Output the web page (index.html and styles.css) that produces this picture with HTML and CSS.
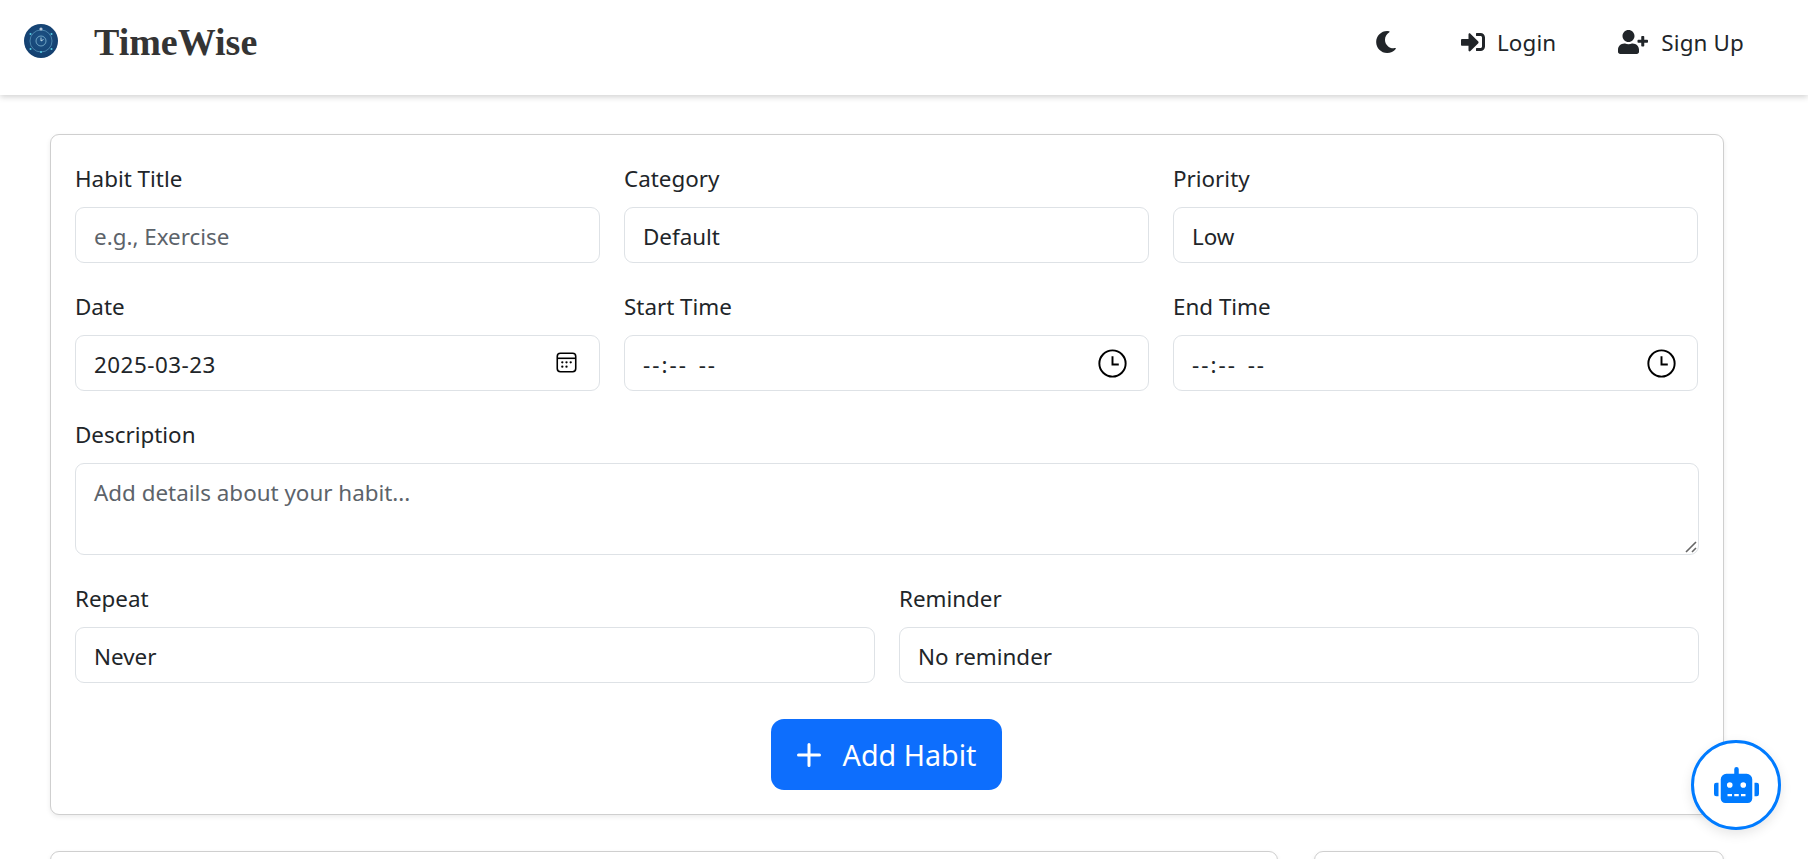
FILE: index.html
```html
<!DOCTYPE html>
<html lang="en">
<head>
<meta charset="utf-8">
<title>TimeWise</title>
<link rel="stylesheet" href="styles.css">
</head>
<body>
<nav class="navbar">
  <a class="brand">
    <svg class="logo" viewBox="0 0 34 34" aria-hidden="true">
      <defs><radialGradient id="lg" cx="50%" cy="45%" r="60%"><stop offset="0" stop-color="#1d5488"/><stop offset="1" stop-color="#123c6b"/></radialGradient></defs>
      <circle cx="17" cy="17" r="17" fill="url(#lg)"/>
      <circle cx="17" cy="17" r="11" fill="none" stroke="#5f9cc0" stroke-width=".7"/>
      <circle cx="17" cy="17" r="5" fill="none" stroke="#8fc4dc" stroke-width=".7"/>
      <path d="M17 13.5V17l2.5-1.5" fill="none" stroke="#d6eef5" stroke-width=".8"/>
      <g fill="#58d0e6"><circle cx="17" cy="28" r="1"/><circle cx="6.5" cy="10" r="1"/><circle cx="27.5" cy="10" r="1"/><circle cx="6.5" cy="25" r="1"/><circle cx="27.5" cy="25" r="1"/></g>
      <circle cx="17" cy="5" r="1.6" fill="#b9c6d8"/>
    </svg>
    <span class="brand-name">TimeWise</span>
  </a>
  <div class="nav-actions">
    <button class="nav-icon" aria-label="Dark mode">
      <svg class="ico-moon" viewBox="0 0 512 512"><path d="M283.211 512c78.962 0 151.079-35.925 198.857-94.792 7.068-8.708-.639-21.43-11.562-19.35-124.203 23.654-238.262-71.576-238.262-196.954 0-72.222 38.662-138.635 101.498-174.394 9.686-5.512 7.25-20.197-3.756-22.23A258.156 258.156 0 0 0 283.211 0c-141.309 0-256 114.511-256 256 0 141.309 114.511 256 256 256z"/></svg>
    </button>
    <a class="nav-link">
      <svg class="ico-login" viewBox="0 0 512 512"><path d="M416 448h-84c-6.6 0-12-5.4-12-12v-40c0-6.6 5.4-12 12-12h84c17.7 0 32-14.3 32-32V160c0-17.7-14.3-32-32-32h-84c-6.6 0-12-5.4-12-12V76c0-6.6 5.4-12 12-12h84c53 0 96 43 96 96v192c0 53-43 96-96 96zm-47-201L201 79c-15-15-41-4.5-41 17v96H24c-13.3 0-24 10.7-24 24v96c0 13.3 10.7 24 24 24h136v96c0 21.5 26 32 41 17l168-168c9.3-9.4 9.3-24.6 0-34z"/></svg>
      Login
    </a>
    <a class="nav-link">
      <svg class="ico-signup" viewBox="0 0 640 512"><path d="M624 208h-64v-64c0-8.8-7.2-16-16-16h-32c-8.8 0-16 7.2-16 16v64h-64c-8.8 0-16 7.2-16 16v32c0 8.8 7.2 16 16 16h64v64c0 8.8 7.2 16 16 16h32c8.8 0 16-7.2 16-16v-64h64c8.8 0 16-7.2 16-16v-32c0-8.8-7.2-16-16-16zm-400 48c70.7 0 128-57.3 128-128S294.7 0 224 0 96 57.3 96 128s57.3 128 128 128zm89.6 32h-16.7c-22.2 10.2-46.9 16-72.9 16s-50.6-5.8-72.9-16h-16.7C60.2 288 0 348.2 0 422.4V464c0 26.5 21.5 48 48 48h352c26.5 0 48-21.5 48-48v-41.6c0-74.2-60.2-134.4-134.4-134.4z"/></svg>
      Sign Up
    </a>
  </div>
</nav>

<main class="page">
  <form class="card form-card">
    <div class="row row-3">
      <div class="field"><label>Habit Title</label><div class="control placeholder">e.g., Exercise</div></div>
      <div class="field"><label>Category</label><div class="control">Default</div></div>
      <div class="field"><label>Priority</label><div class="control">Low</div></div>
    </div>
    <div class="row row-3">
      <div class="field"><label>Date</label>
        <div class="control date">2025-03-23
          <svg class="ico-cal" viewBox="0 0 20 20"><rect x="1.2" y="1.2" width="17.6" height="17.6" rx="3" fill="none" stroke="#000" stroke-width="1.5"/><path d="M1.2 6h17.6" stroke="#000" stroke-width="1.5"/><g><circle cx="6" cy="9.8" r="1.1"/><circle cx="10" cy="9.8" r="1.1"/><circle cx="14" cy="9.8" r="1.1"/><circle cx="6" cy="14" r="1.1"/><circle cx="10" cy="14" r="1.1"/></g></svg>
        </div>
      </div>
      <div class="field"><label>Start Time</label>
        <div class="control time">--:-- --
          <svg class="ico-clock" viewBox="0 0 30 30"><circle cx="15" cy="15" r="13.6" fill="none" stroke="#000" stroke-width="2"/><path d="M15 7.5V16h6.5" fill="none" stroke="#000" stroke-width="2"/></svg>
        </div>
      </div>
      <div class="field"><label>End Time</label>
        <div class="control time">--:-- --
          <svg class="ico-clock" viewBox="0 0 30 30"><circle cx="15" cy="15" r="13.6" fill="none" stroke="#000" stroke-width="2"/><path d="M15 7.5V16h6.5" fill="none" stroke="#000" stroke-width="2"/></svg>
        </div>
      </div>
    </div>
    <div class="row">
      <div class="field"><label>Description</label>
        <div class="control area placeholder">Add details about your habit...
          <svg class="ico-resize" viewBox="0 0 12 12"><path d="M1 11 11 1M7 11l4-4" stroke="#666" stroke-width="1.6" fill="none"/></svg>
        </div>
      </div>
    </div>
    <div class="row row-2">
      <div class="field"><label>Repeat</label><div class="control">Never</div></div>
      <div class="field"><label>Reminder</label><div class="control">No reminder</div></div>
    </div>
    <div class="actions">
      <button class="btn-primary" type="button">
        <svg class="ico-plus" viewBox="0 0 24 24"><path d="M12 1.5v21M1.5 12h21" stroke="#fff" stroke-width="3" stroke-linecap="round" fill="none"/></svg>
        Add Habit
      </button>
    </div>
  </form>
  <div class="lower">
    <section class="card lower-main"></section>
    <aside class="card lower-side"></aside>
  </div>
</main>

<button class="chat-fab" aria-label="Assistant">
  <svg viewBox="0 0 640 512"><path d="M32,224H64V416H32A31.96166,31.96166,0,0,1,0,384V256A31.96166,31.96166,0,0,1,32,224Zm512-48V448a64.06328,64.06328,0,0,1-64,64H160a64.06328,64.06328,0,0,1-64-64V176a79.974,79.974,0,0,1,80-80H288V32a32,32,0,0,1,64,0V96H464A79.974,79.974,0,0,1,544,176ZM264,256a40,40,0,1,0-40,40A39.997,39.997,0,0,0,264,256Zm-8,128H192v32h64Zm96,0H288v32h64ZM456,256a40,40,0,1,0-40,40A39.997,39.997,0,0,0,456,256Zm-8,128H384v32h64ZM640,256V384a31.96166,31.96166,0,0,1-32,32H576V224h32A31.96166,31.96166,0,0,1,640,256Z"/></svg>
</button>
</body>
</html>
```
FILE: styles.css
```css
* { box-sizing: border-box; }
html, body { height: 100%; overflow: hidden; }
body {
  margin: 0;
  background: #fff;
  color: #212529;
  font-family: "Noto Sans", "Open Sans", sans-serif;
}
.navbar {
  height: 95px;
  display: flex;
  align-items: center;
  justify-content: space-between;
  padding: 0 64px 11px 24px;
  background: #fff;
  box-shadow: 0 2px 6px rgba(0, 0, 0, .18);
  position: relative;
}
.brand { display: flex; align-items: center; gap: 36px; }
.logo { width: 34px; height: 34px; margin-top: -2px; }
.brand-name {
  font-family: "Liberation Serif", serif;
  font-weight: 700;
  font-size: 38px;
  color: #343434;
}
.nav-actions { display: flex; align-items: center; }
.nav-icon { background: none; border: 0; padding: 0; display: flex; margin-right: 64px; }
.ico-moon { width: 22px; height: 22px; fill: #212529; }
.nav-link { display: flex; align-items: center; font-size: 22.4px; letter-spacing: .15px; color: #212529; }
.nav-link + .nav-link { margin-left: 62px; }
.ico-login { width: 24px; height: 24px; fill: #212529; margin-right: 12px; }
.ico-signup { width: 30px; height: 24px; fill: #212529; margin-right: 13px; }

.page { padding: 39px 84px 0 50px; }
.card {
  background: #fff;
  border: 1px solid #cfcfcf;
  border-radius: 9px;
  box-shadow: 0 2px 5px rgba(0, 0, 0, .08);
}
.form-card {
  padding: 25px 24px 24px;
  display: flex;
  flex-direction: column;
  gap: 25px;
}
.row { display: grid; gap: 24px; }
.row-3 { grid-template-columns: repeat(3, 525px); }
.row-2 { grid-template-columns: repeat(2, 1fr); }
label {
  display: block;
  font-size: 22.4px;
  line-height: 38px;
  margin-bottom: 9px;
  color: #212529;
}
.control {
  position: relative;
  height: 56px;
  padding: 3px 18px 0;
  display: flex;
  align-items: center;
  border: 1px solid #dee2e6;
  border-radius: 9px;
  font-size: 22.4px;
  color: #212529;
  background: #fff;
}
.placeholder { color: #5c636a; }
.area { height: 92px; align-items: flex-start; padding-top: 13px; }
.date { letter-spacing: .5px; }
.time { letter-spacing: 2px; word-spacing: 3px; }
.ico-cal { position: absolute; right: 22px; top: 16px; width: 21px; height: 21px; }
.ico-clock { position: absolute; right: 21px; top: 13px; width: 29px; height: 29px; }
.ico-resize { position: absolute; right: 1px; bottom: 1px; width: 12px; height: 12px; }
.actions { display: flex; justify-content: center; margin-top: 11px; padding-right: 1px; }
.btn-primary {
  width: 231px;
  height: 71px;
  display: flex;
  align-items: center;
  justify-content: center;
  gap: 22px;
  background: #0d6efd;
  border: 0;
  border-radius: 13px;
  color: #fff;
  font: inherit;
  font-size: 28.7px;
}
.ico-plus { width: 24px; height: 24px; }
.lower {
  display: grid;
  grid-template-columns: 1228px 410px;
  gap: 36px;
  margin-top: 36px;
}
.lower-main, .lower-side { height: 300px; }
.chat-fab {
  position: fixed;
  right: 27px;
  bottom: 29px;
  width: 90px;
  height: 90px;
  display: flex;
  align-items: center;
  justify-content: center;
  padding: 0;
  background: #fff;
  border: 3px solid #007bff;
  border-radius: 50%;
  box-shadow: 0 4px 12px rgba(0, 0, 0, .1);
}
.chat-fab svg { width: 45px; height: 36px; fill: #007bff; }
```
